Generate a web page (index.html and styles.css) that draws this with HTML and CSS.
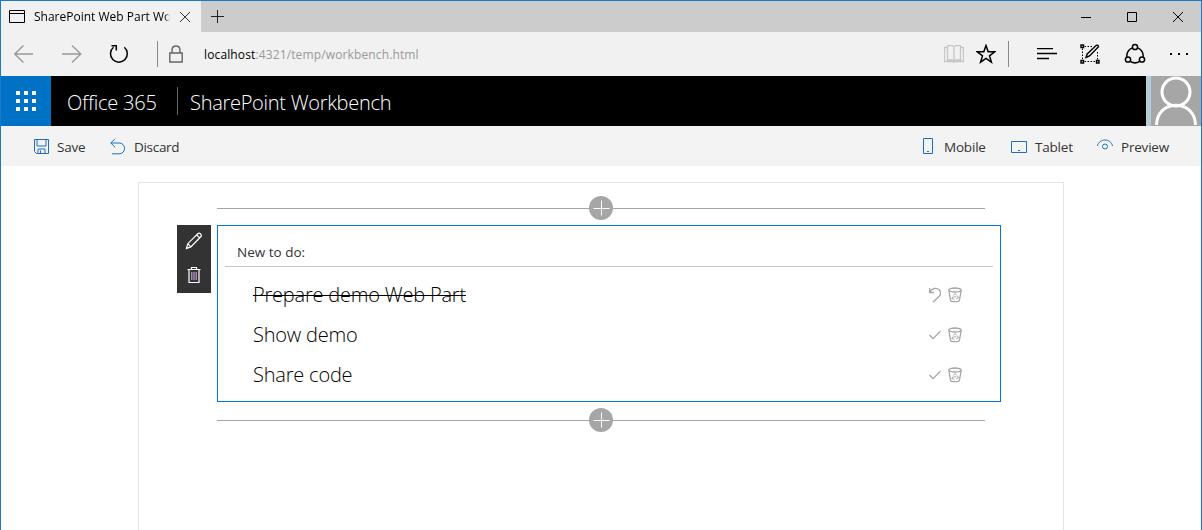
FILE: index.html
```html
<!DOCTYPE html>
<html lang="en">
<head>
<meta charset="utf-8">
<title>SharePoint Web Part Workbench</title>
<link rel="stylesheet" href="styles.css">
</head>
<body>
<svg class="defs" width="0" height="0" aria-hidden="true">
  <symbol id="bin" viewBox="0 0 14 16">
    <ellipse cx="7" cy="3" rx="6.2" ry="2"/>
    <path d="M.8 3 2.6 13.6C3 15 11 15 11.4 13.6L13.2 3"/><path stroke-width="1" d="M5.2 8.6 7 6.6l1.7 1.9M9.4 8.8l1 2.2-2 .9M6.4 12.2 3.9 11.6l.9-2M5.5 9.9h2.8"/>
  </symbol>
  <symbol id="check" viewBox="0 0 12 12"><path d="M.5 6 4 9.6 11.500 2.200"/></symbol>
</svg>
<div class="window">
  <div class="tabs">
    <div class="tab">
      <svg class="tab-icon" width="16" height="14" viewBox="0 0 16 14"><path d="M.5.5h15v12H.5zM.5 3.5h15"/></svg>
      <span class="tab-title">SharePoint Web Part Wo</span>
      <svg class="tab-close" width="10" height="10" viewBox="0 0 10 10"><path d="M0 0 10 10M10 0 0 10"/></svg>
    </div>
    <svg class="tab-new" width="13" height="13" viewBox="0 0 13 13"><path d="M6.5 0v13M0 6.5h13"/></svg>
    <svg class="win-controls" width="103" height="12" viewBox="0 0 103 12"><path d="M0 6.5h10M46.500 1.500h9v9h-9zM92 1l10 10M102 1 92 11"/></svg>
  </div>
  <div class="toolbar">
    <svg class="nav" width="116" height="22" viewBox="0 0 116 22">
      <path class="dim" d="M19 11H.8M9.500 2.500.8 11l8.700 8.500M48 11h18.500M58 2.500 66.800 11 58 19.500"/>
      <path class="strong" d="M99.500 4.300A8.400 8.400 0 1 0 110.300 4.300M97.500 2.700h4.800v4.800"/>
    </svg>
    <span class="divider"></span>
    <svg class="lock" width="14" height="18" viewBox="0 0 14 18"><path d="M.8 8h12.400v9H.8zM3 8V5.300C3-.4 11-.4 11 5.300V8"/></svg>
    <span class="url">localhost<span class="url-path">:4321/temp/workbench.html</span></span>
    <svg class="book" width="20" height="18" viewBox="0 0 20 18"><path d="M.5 2.500h3v-2H8l2 1.200L12 .5h4.500v2h3v14H11l-1 1-1-1H.5zM3.500 2.500V15H8l2 1 2-1h4.500V2.500M10 1.500V16"/></svg>
    <svg class="star" width="20" height="20" viewBox="0 0 20 20"><path d="m10 1.500 2.200 6.200 6.500.1-5.200 4 1.900 6.400L10 14.500l-5.400 3.700 1.900-6.400-5.200-4 6.500-.1z"/></svg>
    <span class="divider"></span>
    <svg class="hub" width="20" height="12" viewBox="0 0 20 12"><path d="M0 .5h16M0 5.500h20M0 10.500h12"/></svg>
    <svg class="note" width="20" height="20" viewBox="0 0 20 20">
      <path class="dots" d="M4.500 2.500h8M2.500 4.500v11M4.500 17.500h11M17.500 8v8"/>
      <path d="M1 1h2.500v2.500H1zM1 16.500h2.500V19H1zM16.500 16.500H19V19h-2.500zM6 13.500l1.200-3.500L16.300 1.300q2-.5 2.200 1.500L9.500 12z"/>
    </svg>
    <svg class="share" width="22" height="22" viewBox="0 0 22 22">
      <circle cx="11" cy="4" r="2.600"/><circle cx="4" cy="16.500" r="2.600"/><circle cx="18" cy="16.500" r="2.600"/>
      <path d="M8.400 4.900a8.300 8.300 0 0 0-5.500 9M13.600 4.900a8.300 8.300 0 0 1 5.500 9M6.300 18.300a8.400 8.400 0 0 0 9.400 0"/>
    </svg>
    <svg class="more" width="18" height="4" viewBox="0 0 18 4"><path d="M0 1h2v2H0zM8 1h2v2H8zM16 1h2v2h-2z"/></svg>
  </div>
  <header class="suite">
    <div class="waffle"><i></i><i></i><i></i><i></i><i></i><i></i><i></i><i></i><i></i></div>
    <span class="brand">Office 365</span>
    <span class="brand-line"></span>
    <span class="app">SharePoint Workbench</span>
    <svg class="avatar" width="50" height="50" viewBox="0 0 50 50"><circle cx="25" cy="16" r="14"/><path d="M5.500 49C6 22.500 44 22.500 44.500 49"/></svg>
  </header>
  <div class="commands">
    <svg class="c-save" width="15" height="15" viewBox="0 0 15 15"><path d="M.5.500h14v14h-12l-2-2zM3 .5v6.500h9V.5M4 14.500V10h7v4.500M6.500 14v-2.500"/></svg>
    <span class="t-save">Save</span>
    <svg class="c-undo" width="15" height="17" viewBox="0 0 15 17"><path d="M5 .8.800 5 5 9.200M.8 5h8.400a5.400 5.400 0 0 1 0 10.800H2"/></svg>
    <span class="t-discard">Discard</span>
    <svg class="c-mobile" width="11" height="16" viewBox="0 0 11 16"><path d="M.5.500h9v15h-9zM4 13.500h2"/></svg>
    <span class="t-mobile">Mobile</span>
    <svg class="c-tablet" width="17" height="12" viewBox="0 0 17 12"><path d="M.5.500h15v11H.5zM7 9.500h2"/></svg>
    <span class="t-tablet">Tablet</span>
    <svg class="c-eye" width="16" height="12" viewBox="0 0 16 12"><path d="M.5 7C2-1 14-1 15.500 7"/><circle cx="8" cy="7.500" r="2.500"/></svg>
    <span class="t-preview">Preview</span>
  </div>
  <main class="canvas">
    <div class="add-row"><svg width="24" height="24" viewBox="0 0 24 24"><circle cx="12" cy="12" r="12"/><path d="M12.500 4.500v15M4.500 12.500h16"/></svg></div>
    <div class="part-row">
      <div class="part-tools">
        <svg width="18" height="18" viewBox="0 0 18 18"><path d="m1.500 16.500 1.300-4.800L13 1.500c1.600-1.100 4.200 1.300 3 3L5.800 14.900zM2.800 11.700l3 3.200M11.700 2.800l3 3.200"/></svg>
        <svg width="18" height="18" viewBox="0 0 18 18"><path d="M2.500 3.500h13M6.500 3V1.500h5V3M4 4v12.500h10V4"/><path class="tint" d="M6.800 6v8M9 6v8M11.200 6v8"/></svg>
      </div>
      <section class="part">
        <div class="new-todo">New to do:</div>
        <div class="todo"><span class="name-1">Prepare demo Web Part</span><svg class="act" width="12" height="16" viewBox="0 0 12 16"><path d="M.6 1v4.500H5M.8 5.200C3 .8 8 .2 10.400 3c1.500 2 1.200 4.500 0 6L4 15.200"/></svg><svg class="bin" width="14" height="16"><use href="#bin"/></svg></div>
        <div class="todo"><span class="name-2">Show demo</span><svg class="act" width="12" height="12"><use href="#check"/></svg><svg class="bin" width="14" height="16"><use href="#bin"/></svg></div>
        <div class="todo"><span class="name-3">Share code</span><svg class="act" width="12" height="12"><use href="#check"/></svg><svg class="bin" width="14" height="16"><use href="#bin"/></svg></div>
      </section>
    </div>
    <div class="add-row"><svg width="24" height="24" viewBox="0 0 24 24"><circle cx="12" cy="12" r="12"/><path d="M12.500 4.500v15M4.500 12.500h16"/></svg></div>
  </main>
</div>
</body>
</html>
```
FILE: styles.css
```css
* { box-sizing: border-box; }
body { margin: 0; background: #fff; font-family: "Open Sans", "Noto Sans", sans-serif; overflow: hidden; }
.defs { position: absolute; }
svg { display: block; flex: none; fill: none; stroke: #000; }
span { white-space: nowrap; }
.window { width: 1202px; height: 530px; border: 1px solid #1979ca; border-bottom: 0; display: flex; flex-direction: column; overflow: hidden; }

.tabs { flex: none; height: 31px; background: #ccc; display: flex; align-items: center; }
.tab { width: 200px; height: 31px; background: #f1f1f1; display: flex; align-items: center; padding-left: 8px; }
.tab-icon { margin-right: 9px; }
.tab-title { width: 136px; font-size: 12px; letter-spacing: 0; color: #000; -webkit-mask-image: linear-gradient(to right, #000 131px, transparent 136px); }
.tab-close { margin-left: 10px; stroke: #333; }
.tab-new { margin-left: 10px; stroke: #222; }
.win-controls { margin-left: auto; margin-right: 17px; }

.toolbar { flex: none; height: 44px; background: #f1f1f1; display: flex; align-items: center; }
.nav { margin-left: 13px; }
.nav .dim { stroke: #999; stroke-width: 1.3; }
.nav .strong { stroke-width: 1.5; }
.divider { width: 1px; height: 26px; background: #888; margin-left: 27px; }
.lock { margin-left: 11px; stroke: #666; stroke-width: 1.4; }
.url { margin-left: 21px; font-size: 12px; letter-spacing: .13px; color: #000; }
.url-path { color: #999; }
.book { margin-left: auto; stroke: #c6c6c6; stroke-width: 1.3; }
.star { margin-left: 12px; stroke-width: 1.5; }
.star + .divider { margin-left: 12px; }
.hub { margin-left: 28px; stroke-width: 1.3; }
.note { margin-left: 23px; stroke-width: 1.4; }
.note .dots { stroke-dasharray: 1.5 1.5; stroke-width: 1; }
.share { margin-left: 24px; stroke-width: 1.5; }
.more { margin-left: 24px; margin-right: 13px; fill: #000; stroke: none; }

.suite { flex: none; height: 50px; background: #000; color: #fff; display: flex; align-items: center; font-size: 20px; font-weight: 300; }
.waffle { width: 50px; height: 50px; background: #0072c6; display: grid; grid-template-columns: repeat(3, 4px); gap: 4px; place-content: center; }
.waffle i { height: 4px; background: #fff; }
.brand, .app { padding-top: 2px; }
.brand { margin-left: 16px; width: 110px; letter-spacing: -.2px; }
.brand-line { width: 1px; height: 28px; background: #666; }
.app { margin-left: 12px; letter-spacing: -.28px; }
.avatar { width: 55px; margin-left: auto; border-left: 5px solid #b5cdd8; background: #a6a6a6; stroke: #fff; stroke-width: 3; }

.commands { flex: none; height: 40px; background: #f3f3f3; display: flex; align-items: center; padding-left: 33px; font-size: 13.500px; color: #333; letter-spacing: -.2px; }
.commands svg { stroke: #1a6fc4; }
.commands span { padding-top: 2px; }
.t-save { margin-left: 8px; width: 53px; }
.t-discard { margin-left: 9px; letter-spacing: -.3px; }
.c-mobile { margin-left: auto; }
.t-mobile { margin-left: 10px; width: 67px; }
.c-tablet { margin-top: 2px; }
.t-tablet { margin-left: 7px; width: 62px; }
.c-eye { margin-top: -2px; }
.t-preview { margin-left: 8px; width: 80px; }

.canvas { width: 926px; flex: 1; margin: 16px 0 0 137px; border: 1px solid #e3e3e3; border-bottom: 0; padding: 13px 0 0 38px; }
.add-row { width: 768px; height: 24px; margin-left: 40px; display: flex; justify-content: center; background: linear-gradient(#a6a6a6, #a6a6a6) 0 12px / 100% 1px no-repeat; }
.add-row circle { fill: #a6a6a6; stroke: none; }
.add-row path { stroke: #fff; }
.part-row { display: flex; gap: 6px; align-items: flex-start; margin: 5px 0 6px; }
.part-tools { width: 34px; height: 68px; background: #333; display: flex; flex-direction: column; align-items: center; gap: 16px; padding-top: 7px; }
.part-tools svg { stroke: #fff; stroke-width: 1.2; }
.part-tools .tint { stroke: #c29bd0; }
.part { width: 784px; height: 177px; border: 1px solid #0078d7; padding: 8px 7px 0; }
.new-todo { height: 33px; border-bottom: 1px solid #c8c8c8; padding: 9px 0 0 12px; font-size: 13.500px; line-height: 19px; letter-spacing: 0; color: #333; margin-bottom: 8px; }
.todo { height: 40px; display: flex; align-items: center; padding: 0 31px 0 28px; font-size: 20px; font-weight: 300; color: #000; }
.todo span { padding-bottom: 2px; }
.todo svg { stroke: #a6a6a6; stroke-width: 1.3; }
.act { margin-left: auto; }
.bin { margin-left: 7px; }
.name-1 { text-decoration: line-through; text-decoration-thickness: 1px; }
.name-1, .name-2, .name-3 { letter-spacing: -.2px; }
```
